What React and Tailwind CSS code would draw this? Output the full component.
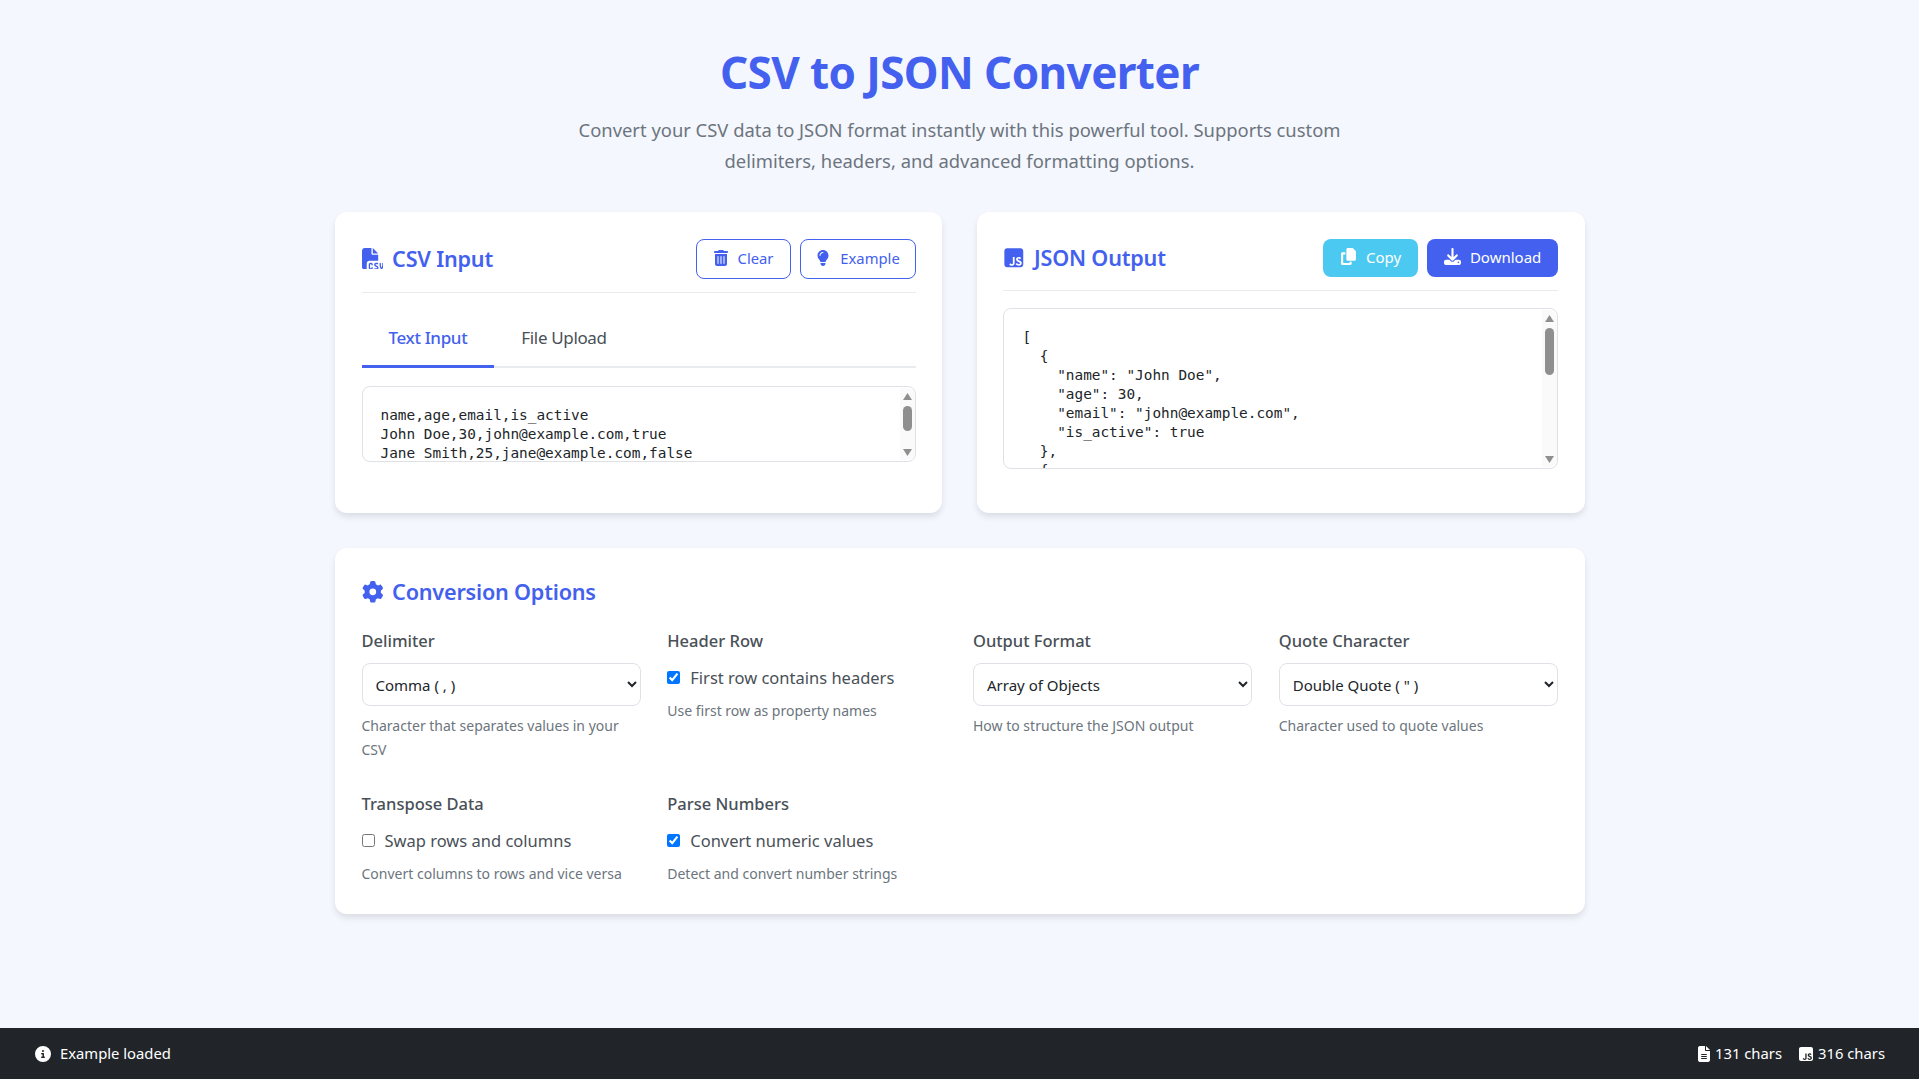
import React from 'react'
import {
  FaFileCsv,
  FaTrashCan,
  FaLightbulb,
  FaSquareJs,
  FaCopy,
  FaDownload,
  FaGear,
  FaCircleInfo,
  FaFileLines,
} from 'react-icons/fa6'

const csvText = `name,age,email,is_active
John Doe,30,john@example.com,true
Jane Smith,25,jane@example.com,false
Bob Johnson,35,bob@example.com,true`

const jsonText = `[
  {
    "name": "John Doe",
    "age": 30,
    "email": "john@example.com",
    "is_active": true
  },
  {
    "name": "Jane Smith",
    "age": 25,
    "email": "jane@example.com",
    "is_active": false
  }
]`

function Scrollbar({ thumbTop, thumbHeight }) {
  return (
    <div className="absolute top-px right-0 bottom-px w-[15px] rounded-r-lg bg-[#fafafa]">
      <svg className="absolute top-[5px] left-[3px] h-[7px] w-[9px]" viewBox="0 0 9 7">
        <path d="M4.5 0 9 7H0z" fill="#8f8f8f" />
      </svg>
      <div
        className="absolute left-[3px] w-[9px] rounded-full bg-[#8f8f8f]"
        style={{ top: thumbTop, height: thumbHeight }}
      />
      <svg className="absolute bottom-[4px] left-[3px] h-[7px] w-[9px]" viewBox="0 0 9 7">
        <path d="M0 0h9L4.5 7z" fill="#8f8f8f" />
      </svg>
    </div>
  )
}

function CodeBox({ value, height, thumbTop, thumbHeight }) {
  return (
    <div className={`relative overflow-hidden rounded-lg border border-[#dee2e6] bg-white ${height}`}>
      <pre className="h-full overflow-hidden px-[18px] pt-[19px] pb-[18px] font-['DejaVu_Sans_Mono',monospace] text-[14.4px] leading-[18.9px] text-[#212529]">
        {value}
      </pre>
      <Scrollbar thumbTop={thumbTop} thumbHeight={thumbHeight} />
    </div>
  )
}

function CardTitle({ icon: Icon, children }) {
  return (
    <h2 className="flex items-center gap-[9px] text-[21.6px] leading-[36px] font-semibold tracking-[-0.2px] text-[#4361ee]">
      <Icon className="h-[21.6px] w-auto shrink-0" />
      {children}
    </h2>
  )
}

function OutlineButton({ icon: Icon, children, width }) {
  return (
    <button className={`flex h-10 items-center justify-center gap-[9px] rounded-lg border border-[#4361ee] text-[14.8px] text-[#4361ee] ${width}`}>
      <Icon className="h-4 w-auto -translate-y-px" />
      {children}
    </button>
  )
}

function SolidButton({ icon: Icon, children, width, color }) {
  return (
    <button className={`flex h-[38px] items-center justify-center gap-[9px] rounded-lg text-[15px] text-white ${width} ${color}`}>
      <Icon className="h-[17px] w-auto -translate-y-px" />
      {children}
    </button>
  )
}

function Label({ children }) {
  return <div className="mb-[9px] text-[16.5px] leading-[27px] font-medium text-[#495057]">{children}</div>
}

function Help({ children, className = '' }) {
  return <p className={`text-[14px] leading-[24px] text-[#6c757d] ${className}`}>{children}</p>
}

function SelectField({ label, value, help }) {
  return (
    <div>
      <Label>{label}</Label>
      <select
        defaultValue={value}
        className="h-[43px] w-full rounded-lg border border-[#dee2e6] bg-white pr-2 pl-[9px] text-[15px] text-[#212529]"
      >
        <option>{value}</option>
      </select>
      <Help className="mt-2">{help}</Help>
    </div>
  )
}

function CheckField({ label, text, help, checked }) {
  return (
    <div>
      <Label>{label}</Label>
      <label className="flex h-[30px] items-center gap-[10px] text-[16.5px] text-[#495057]">
        <input type="checkbox" defaultChecked={checked} className="h-[13px] w-[13px] -translate-y-px" />
        {text}
      </label>
      <Help className="mt-1.5">{help}</Help>
    </div>
  )
}

export default function App() {
  return (
    <div className="flex min-h-screen flex-col bg-[#f5f7ff] font-['Noto_Sans',sans-serif] text-[#212529]">
      <main className="mx-auto w-[1250px] flex-1 pt-[45px]">
        <header className="mb-[36px] text-center">
          <h1 className="text-[44px] leading-[54px] font-bold tracking-[-0.6px] text-[#4361ee]">CSV to JSON Converter</h1>
          <p className="mx-auto mt-4 max-w-[800px] text-[18.4px] leading-[30.6px] text-[#6c757d]">
            Convert your CSV data to JSON format instantly with this powerful tool. Supports custom delimiters, headers, and advanced formatting options.
          </p>
        </header>

        <div className="grid grid-cols-2 gap-[35.2px]">
          <section className="rounded-xl bg-white py-[26.4px] pr-[26.4px] pl-[27px] shadow-[0_4px_6px_rgba(0,0,0,0.1)]">
            <div className="flex items-center justify-between border-b border-[#e9ecef] pb-[13px]">
              <CardTitle icon={FaFileCsv}>CSV Input</CardTitle>
              <div className="flex gap-[9px]">
                <OutlineButton icon={FaTrashCan} width="w-[95px]">Clear</OutlineButton>
                <OutlineButton icon={FaLightbulb} width="w-[116px]">Example</OutlineButton>
              </div>
            </div>
            <div className="mt-[17.6px] mb-[17.6px] flex border-b-2 border-[#e9ecef] text-[17px] leading-[30px] tracking-[-0.35px]">
              <button className="-mb-0.5 border-b-[3px] border-[#4361ee] px-[27px] py-[12.5px] font-medium text-[#4361ee]">Text Input</button>
              <button className="-mb-0.5 border-b-[3px] border-transparent px-[27px] py-[12.5px] text-[#495057]">File Upload</button>
            </div>
            <CodeBox value={csvText} height="h-[76px]" thumbTop={18} thumbHeight={25} />
          </section>

          <section className="rounded-xl bg-white p-[26.4px] shadow-[0_4px_6px_rgba(0,0,0,0.1)]">
            <div className="flex items-center justify-between border-b border-[#e9ecef] pb-[13px]">
              <CardTitle icon={FaSquareJs}>JSON Output</CardTitle>
              <div className="flex gap-[9px]">
                <SolidButton icon={FaCopy} width="w-[95px]" color="bg-[#4cc9f0]">Copy</SolidButton>
                <SolidButton icon={FaDownload} width="w-[131px]" color="bg-[#4361ee]">Download</SolidButton>
              </div>
            </div>
            <div className="mt-[17.6px] mb-[17px]">
              <CodeBox value={jsonText} height="h-[161px]" thumbTop={18} thumbHeight={47} />
            </div>
          </section>
        </div>

        <section className="mt-[35.2px] rounded-xl bg-white pt-[26.4px] pr-[26.4px] pb-[27.4px] pl-[27px] shadow-[0_4px_6px_rgba(0,0,0,0.1)]">
          <div className="mb-[17px]">
            <CardTitle icon={FaGear}>Conversion Options</CardTitle>
          </div>
          <div className="grid grid-cols-4 gap-x-[26.4px] gap-y-[28px]">
            <SelectField label="Delimiter" value="Comma ( , )" help="Character that separates values in your CSV" />
            <CheckField label="Header Row" text="First row contains headers" help="Use first row as property names" checked />
            <SelectField label="Output Format" value="Array of Objects" help="How to structure the JSON output" />
            <SelectField label="Quote Character" value={'Double Quote ( " )'} help="Character used to quote values" />
            <CheckField label="Transpose Data" text="Swap rows and columns" help="Convert columns to rows and vice versa" />
            <CheckField label="Parse Numbers" text="Convert numeric values" help="Detect and convert number strings" checked />
          </div>
        </section>
      </main>

      <footer className="flex h-[51px] items-center justify-between bg-[#212529] pr-[34px] pl-[35px] text-[14.8px] text-white">
        <div className="flex items-center gap-[9px]">
          <FaCircleInfo className="h-4 w-4" />
          Example loaded
        </div>
        <div className="flex items-center gap-4">
          <span className="flex items-center gap-[3px]"><FaFileLines className="h-4 w-auto" />131 chars</span>
          <span className="flex items-center gap-1"><FaSquareJs className="h-4 w-auto" />316 chars</span>
        </div>
      </footer>
    </div>
  )
}
